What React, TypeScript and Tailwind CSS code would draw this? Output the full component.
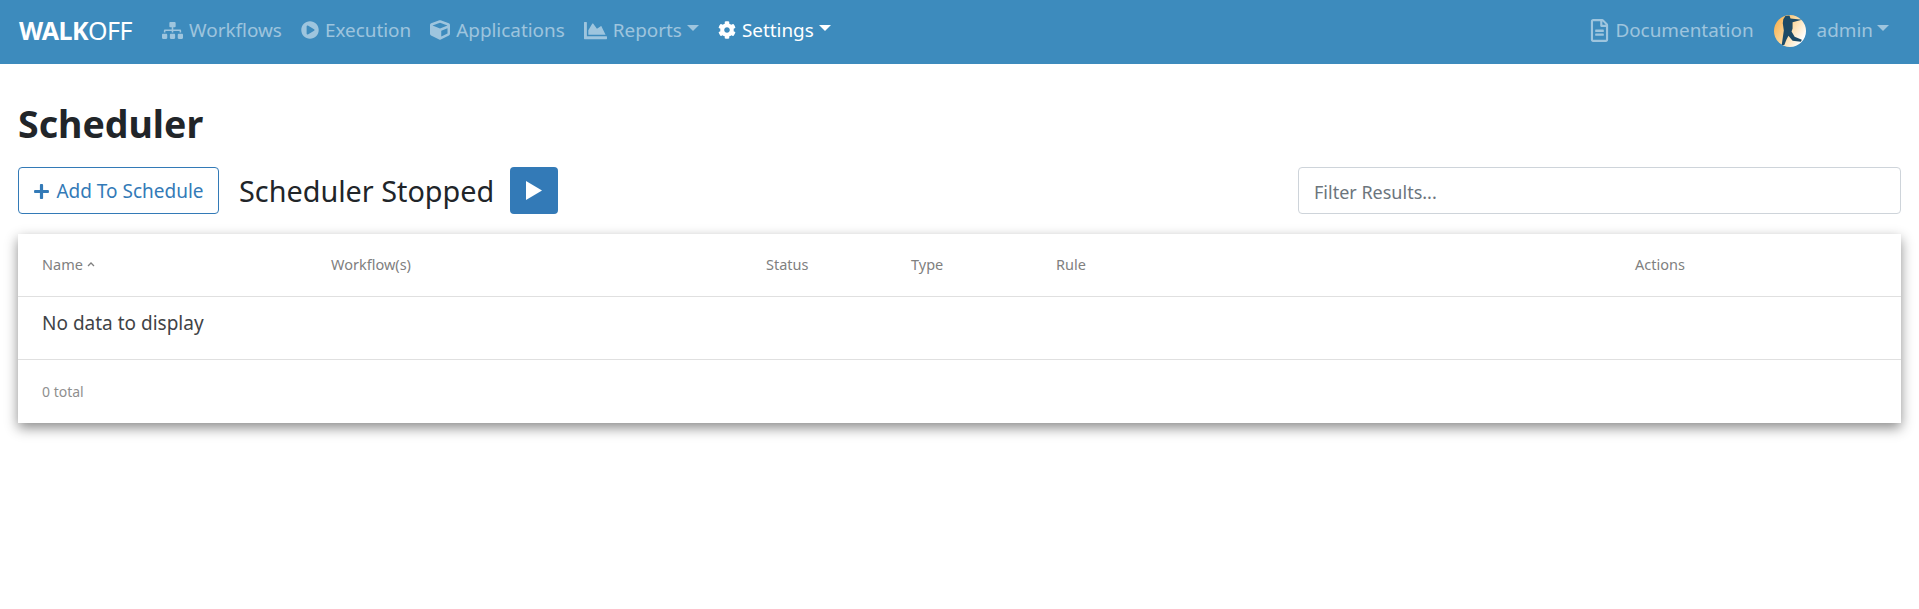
import { FaChartArea, FaCog, FaCube, FaPlayCircle, FaPlus, FaRegFileAlt, FaSitemap } from "react-icons/fa";

const navItems = [
  { label: "Workflows", icon: <FaSitemap className="text-[21px]" /> },
  { label: "Execution", icon: <FaPlayCircle className="text-[18px]" /> },
  { label: "Applications", icon: <FaCube className="text-[20px]" /> },
  { label: "Reports", icon: <FaChartArea className="text-[23px]" />, caret: true },
];

const columns = [
  { label: "Name", width: "w-[289px]", sort: true },
  { label: "Workflow(s)", width: "w-[435px]" },
  { label: "Status", width: "w-[145px]" },
  { label: "Type", width: "w-[145px]" },
  { label: "Rule", width: "w-[579px]" },
  { label: "Actions", width: "w-[200px]" },
];

function Caret() {
  return <span className="ml-[-1px] mt-[-5px] h-0 w-0 border-x-[6px] border-t-[6px] border-x-transparent border-t-current" />;
}

function Avatar() {
  return (
    <svg width="32" height="32" viewBox="0 0 31 31">
      <defs>
        <linearGradient id="sky" x1="0" y1="0" x2="1" y2="0.6">
          <stop offset="0" stopColor="#f9a83c" />
          <stop offset="0.55" stopColor="#fbd9a0" />
          <stop offset="1" stopColor="#ffffff" />
        </linearGradient>
      </defs>
      <circle cx="15.5" cy="15.5" r="15.5" fill="url(#sky)" />
      <path
        d="M11 1L15 .5L16 3.500L27 4.500L18 7L18 13L17 16L20 21L27 24L26 26L18 25L14 20L12 24L10 29L7.500 29L8.500 22L9.500 15L8.500 8L9 4Z"
        fill="#1c4a66"
      />
    </svg>
  );
}

export default function App() {
  return (
    <div className="min-h-[609px] bg-white font-['Noto_Sans',sans-serif] text-[#212529]">
      <nav className="flex h-[64px] items-center bg-[#3d8bbd] pb-[3px] pl-[19px] pr-[30px] text-[18.900px] text-white/50">
        <div className="mr-[30px] text-[25px] tracking-[-0.5px] text-white">
          <span className="font-bold">WALK</span>
          <span>OFF</span>
        </div>
        <div className="flex items-center gap-[19px]">
          {navItems.map((item) => (
            <a key={item.label} className="flex items-center gap-[6px]">
              {item.icon}
              <span>{item.label}</span>
              {item.caret && <Caret />}
            </a>
          ))}
          <a className="flex items-center gap-[6px] text-white">
            <FaCog className="text-[18px]" />
            <span>Settings</span>
            <Caret />
          </a>
        </div>
        <div className="ml-auto flex items-center">
          <a className="mr-[20px] flex items-center gap-[4px]">
            <FaRegFileAlt className="text-[23px]" />
            <span>Documentation</span>
          </a>
          <Avatar />
          <a className="ml-[11px] flex items-center gap-[5px]">
            <span>admin</span>
            <Caret />
          </a>
        </div>
      </nav>

      <main className="px-[18px]">
        <h1 className="mt-[33px] text-[37.5px] leading-[54px] font-bold">Scheduler</h1>
        <div className="mt-[16px] flex items-center">
          <button className="flex h-[47px] w-[201px] items-center justify-center gap-[6px] rounded-[4px] border border-[#337ab7] pt-[2px] text-[19px] text-[#337ab7]">
            <FaPlus className="text-[17px]" />
            Add To Schedule
          </button>
          <span className="ml-[20px] text-[28.800px]">Scheduler Stopped</span>
          <button className="ml-[16px] flex h-[47px] w-[48px] items-center justify-center rounded-[4px] bg-[#337ab7] text-white">
            <svg width="16" height="19" viewBox="0 0 16 19" fill="currentColor">
              <path d="M0 0l16 9.500-16 9.500z" />
            </svg>
          </button>
          <input
            className="ml-auto h-[47px] w-[603px] rounded-[4px] border border-[#ced4da] px-[15px] pt-[2px] text-[18px] placeholder:text-[#6c757d]"
            placeholder="Filter Results..."
          />
        </div>

        <div className="mt-[20px] bg-white shadow-[0_5px_12px_0_rgba(0,0,0,0.45)]">
          <div className="flex h-[63px] items-center border-b border-[#e0e0e0] pb-[1px] pl-[24px] text-[14.500px] text-[#808080]">
            {columns.map((col) => (
              <div key={col.label} className={`flex items-center ${col.width}`}>
                {col.label}
                {col.sort && (
                  <svg className="ml-[4px]" width="8" height="5" viewBox="0 0 8 5" fill="none" stroke="currentColor" strokeWidth="1.300">
                    <path d="M1 4l3-3 3 3" />
                  </svg>
                )}
              </div>
            ))}
          </div>
          <div className="h-[63px] border-b border-[#e0e0e0] pl-[24px] pt-[14px] text-[19px] leading-[25px] text-[#3f4347]">No data to display</div>
          <div className="flex h-[63px] items-center pl-[24px] text-[14px] text-[#8f8f8f]">0 total</div>
        </div>
      </main>
    </div>
  );
}
